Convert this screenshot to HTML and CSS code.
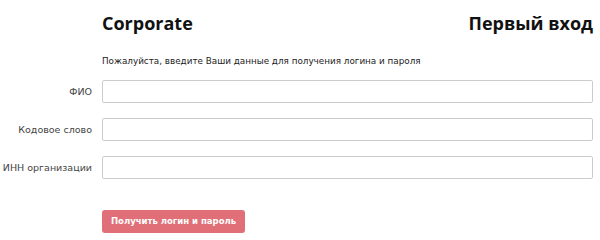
FILE: index.html
```html
<!doctype html>
<html>
<head>
    <meta charset="utf-8" />
    <title>Первый вход</title>
    <link rel="stylesheet" href="styles.css">
</head>
<body>
<div id="page">
    <div class="head">
        <div class="logo">Corporate</div>
        <div class="title">Первый вход</div>
    </div>
    <p class="hint">Пожалуйста, введите Ваши данные для получения логина и пароля</p>
    <form class="form">
        <label class="label" for="fio">ФИО</label>
        <input class="field" id="fio" type="text" />
        <label class="label" for="code">Кодовое слово</label>
        <input class="field" id="code" type="text" />
        <label class="label" for="inn">ИНН организации</label>
        <input class="field" id="inn" type="text" />
        <div></div>
        <div class="actions">
            <button type="button" class="btn">Получить логин и пароль</button>
        </div>
    </form>
</div>
</body>
</html>
```

FILE: styles.css
```css
*{
    margin:0px;
    padding:0px;
    box-sizing:border-box;
}
html,body{
    width:100%;
    height:100%;
    background-color:#fff;
    font-family:'DejaVu Sans',Verdana,sans-serif;
    color:#222;
}
#page{
    padding:0px 7px 0px 102px;
}
.head{
    display:flex;
    justify-content:space-between;
    align-items:baseline;
    padding-top:11px;
    font-family:'Open Sans',sans-serif;
    font-weight:bold;
    font-size:18px;
    color:#111;
}
.hint{
    margin-top:21px;
    font-size:8.8px;
}
.form{
    display:grid;
    grid-template-columns:102px 1fr;
    margin-left:-102px;
    margin-top:14px;
    row-gap:15px;
    align-items:center;
}
.label{
    text-align:right;
    padding-right:10px;
    font-size:9.5px;
    color:#444;
}
.field{
    height:23px;
    border:1px solid #ccc;
    border-radius:2px;
    background:#fff;
    outline:none;
}
.actions{
    padding-top:15px;
}
.btn{
    height:23px;
    padding:0px 9px;
    border:none;
    border-radius:3px;
    background-color:#e06f77;
    color:#fff;
    font-family:'DejaVu Sans',Verdana,sans-serif;
    font-weight:bold;
    font-size:8.5px;
    cursor:pointer;
}
```
